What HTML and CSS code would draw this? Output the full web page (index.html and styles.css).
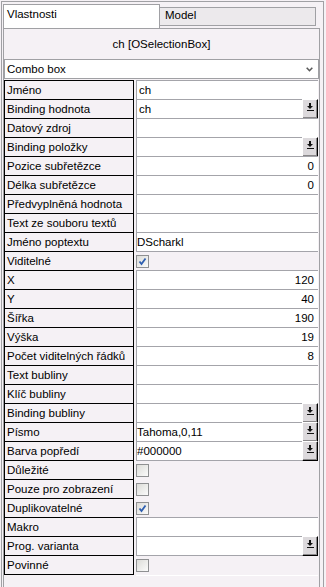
FILE: index.html
```html
<!DOCTYPE html>
<html lang="cs">
  <head>
    <meta charset="UTF-8" />
    <meta name="viewport" content="width=device-width, initial-scale=1.0" />
    <title>Vlastnosti</title>
    <link rel="stylesheet" href="styles.css">
  </head>
  <body>
    <div class="frame">
      <div class="tabs">
        <div class="tab active">Vlastnosti</div>
        <div class="tab">Model</div>
      </div>

      <div class="panel">
        <div class="panel-title">ch [OSelectionBox]</div>
        <div class="combo">
          <span>Combo box</span>
          <svg class="chevron" width="7" height="5" viewBox="0 0 7 5">
            <path d="M0.7 0.7 L3.5 3.7 L6.3 0.7" fill="none" stroke="#5a5a5a" stroke-width="1.6" />
          </svg>
        </div>

        <div class="props">
          <div class="row"><div class="label">Jméno</div><div class="value">ch</div></div>
          <div class="row">
            <div class="label">Binding hodnota</div>
            <div class="value">ch<span class="pick"><svg width="14" height="18" viewBox="0 0 14 18"><rect x="6" y="3" width="2" height="3" /><path d="M4 6 H10 L7 9 Z" /><rect x="4" y="10" width="7" height="1" /></svg></span></div>
          </div>
          <div class="row"><div class="label">Datový zdroj</div><div class="value"></div></div>
          <div class="row">
            <div class="label">Binding položky</div>
            <div class="value"><span class="pick"><svg width="14" height="18" viewBox="0 0 14 18"><rect x="6" y="3" width="2" height="3" /><path d="M4 6 H10 L7 9 Z" /><rect x="4" y="10" width="7" height="1" /></svg></span></div>
          </div>
          <div class="row"><div class="label">Pozice subřetězce</div><div class="value num">0</div></div>
          <div class="row"><div class="label">Délka subřetězce</div><div class="value num">0</div></div>
          <div class="row"><div class="label">Předvyplněná hodnota</div><div class="value"></div></div>
          <div class="row"><div class="label">Text ze souboru textů</div><div class="value"></div></div>
          <div class="row"><div class="label">Jméno poptextu</div><div class="value tight">DScharkl</div></div>
          <div class="row">
            <div class="label">Viditelné</div>
            <div class="value check"><span class="cb"><svg width="11" height="11" viewBox="0 0 11 11"><path d="M2.5 5.5 L4.5 8 L8.5 2.5" fill="none" stroke="#2f5fb0" stroke-width="1.8" /></svg></span></div>
          </div>
          <div class="row"><div class="label">X</div><div class="value num">120</div></div>
          <div class="row"><div class="label">Y</div><div class="value num">40</div></div>
          <div class="row"><div class="label">Šířka</div><div class="value num">190</div></div>
          <div class="row"><div class="label">Výška</div><div class="value num">19</div></div>
          <div class="row"><div class="label">Počet viditelných řádků</div><div class="value num">8</div></div>
          <div class="row"><div class="label">Text bubliny</div><div class="value"></div></div>
          <div class="row"><div class="label">Klíč bubliny</div><div class="value"></div></div>
          <div class="row">
            <div class="label">Binding bubliny</div>
            <div class="value"><span class="pick"><svg width="14" height="18" viewBox="0 0 14 18"><rect x="6" y="3" width="2" height="3" /><path d="M4 6 H10 L7 9 Z" /><rect x="4" y="10" width="7" height="1" /></svg></span></div>
          </div>
          <div class="row">
            <div class="label">Písmo</div>
            <div class="value tight">Tahoma,0,11<span class="pick"><svg width="14" height="18" viewBox="0 0 14 18"><rect x="6" y="3" width="2" height="3" /><path d="M4 6 H10 L7 9 Z" /><rect x="4" y="10" width="7" height="1" /></svg></span></div>
          </div>
          <div class="row">
            <div class="label">Barva popředí</div>
            <div class="value tight">#000000<span class="pick"><svg width="14" height="18" viewBox="0 0 14 18"><rect x="6" y="3" width="2" height="3" /><path d="M4 6 H10 L7 9 Z" /><rect x="4" y="10" width="7" height="1" /></svg></span></div>
          </div>
          <div class="row"><div class="label">Důležité</div><div class="value check"><span class="cb"></span></div></div>
          <div class="row"><div class="label">Pouze pro zobrazení</div><div class="value check"><span class="cb"></span></div></div>
          <div class="row">
            <div class="label">Duplikovatelné</div>
            <div class="value check"><span class="cb"><svg width="11" height="11" viewBox="0 0 11 11"><path d="M2.5 5.5 L4.5 8 L8.5 2.5" fill="none" stroke="#2f5fb0" stroke-width="1.8" /></svg></span></div>
          </div>
          <div class="row"><div class="label">Makro</div><div class="value"></div></div>
          <div class="row">
            <div class="label">Prog. varianta</div>
            <div class="value"><span class="pick"><svg width="14" height="18" viewBox="0 0 14 18"><rect x="6" y="3" width="2" height="3" /><path d="M4 6 H10 L7 9 Z" /><rect x="4" y="10" width="7" height="1" /></svg></span></div>
          </div>
          <div class="row"><div class="label">Povinné</div><div class="value check"><span class="cb"></span></div></div>
        </div>
      </div>
    </div>
  </body>
</html>
```

FILE: styles.css
```css
* {
  margin: 0;
  padding: 0;
  box-sizing: border-box;
}

html,
body {
  height: 587px;
  overflow: hidden;
}

body {
  font-family: "Liberation Sans", Arial, sans-serif;
  font-size: 11.5px;
  color: #000;
  background-color: #f5f1f5;
  padding-top: 1px;
}

.frame {
  width: 323px;
  height: 586px;
  margin-left: 1px;
  padding-top: 2px;
  border: 1px solid #a0a0a4;
  border-bottom: none;
}

/* tabs */
.tabs {
  display: flex;
  align-items: flex-start;
  height: 24px;
  margin-left: 1px;
}

.tab {
  width: 157px;
  height: 19px;
  margin-top: 3px;
  margin-left: -1px;
  padding-left: 5px;
  line-height: 15px;
  background-color: #ece9ec;
  border: 1px solid #a0a0a4;
}

.tab.active {
  height: 24px;
  margin: 0;
  padding-left: 3px;
  line-height: 19px;
  background-color: #fff;
  border-bottom: none;
  position: relative;
  z-index: 1;
}

/* panel */
.panel {
  height: 559px;
  margin: 0 3px 0 1px;
  border: 1px solid #a0a0a4;
  border-bottom: none;
}

.panel-title {
  height: 30px;
  line-height: 30px;
  text-align: center;
}

.combo {
  height: 20px;
  display: flex;
  align-items: center;
  justify-content: space-between;
  padding: 0 5px 0 2px;
  background-color: #fff;
  border: 1px solid #a0a0a4;
}

.chevron {
  margin-top: 1px;
}

.props {
  margin-top: 1px;
}

.row {
  display: flex;
  height: 19px;
}

.label {
  width: 130px;
  height: 19px;
  padding-left: 2px;
  line-height: 18px;
  white-space: nowrap;
  overflow: hidden;
  border: 1px solid #000;
  border-bottom: none;
}

.row:last-child .label {
  height: 20px;
  border-bottom: 1px solid #000;
}

.value {
  width: 182px;
  height: 20px;
  margin-left: 2px;
  padding-left: 2px;
  display: flex;
  align-items: center;
  line-height: 18px;
  white-space: nowrap;
  background-color: #fff;
  border-top: 1px solid #a4a4aa;
  border-bottom: 1px solid #a4a4aa;
  border-left: 1px solid #a4a4aa;
}

.value.num {
  justify-content: flex-end;
  padding-right: 4px;
}

.value.tight {
  padding-left: 0;
}

.value.check {
  align-items: flex-start;
  padding: 4px 0 0 0;
  background-color: transparent;
  border: none;
}

.row:last-child .value.check {
  height: 21px;
  border-bottom: 1px solid #fff;
}

/* browse button */
.pick {
  width: 16px;
  height: 20px;
  margin-left: auto;
  flex-shrink: 0;
  background-color: #dcd9dc;
  border: 1px solid;
  border-color: #fff #000 #000 #fff;
  box-shadow: inset -1px -1px 0 #8a888a;
}

.pick svg {
  display: block;
  fill: #111;
}

/* checkbox */
.cb {
  width: 13px;
  height: 13px;
  padding: 0;
  border: 1px solid #8f9092;
  background: linear-gradient(135deg, #dcdcd8, #fbfbfb);
}

.cb svg {
  display: block;
}
```
